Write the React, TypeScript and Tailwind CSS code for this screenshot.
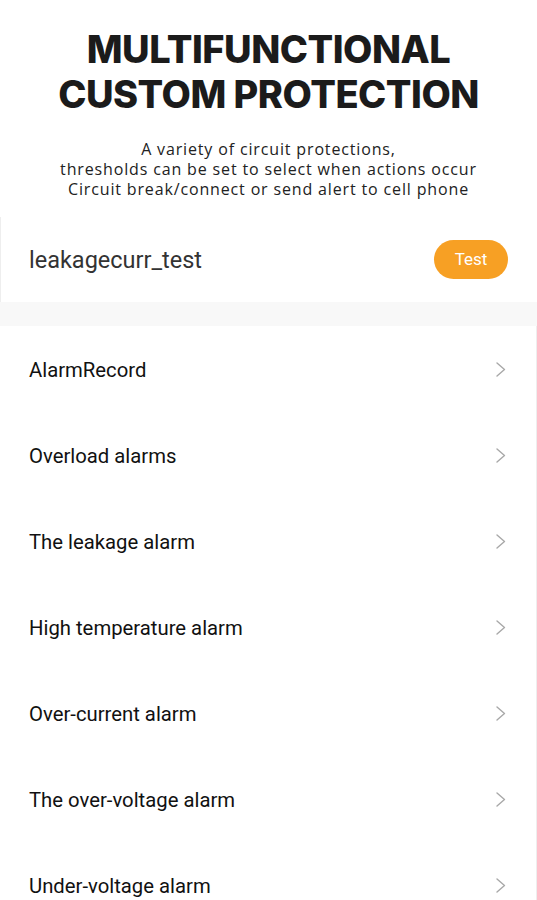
const items = [
  "AlarmRecord",
  "Overload alarms",
  "The leakage alarm",
  "High temperature alarm",
  "Over-current alarm",
  "The over-voltage alarm",
  "Under-voltage alarm",
];

function Chevron() {
  return (
    <svg width="10" height="15" viewBox="0 0 10 15" fill="none" className="text-[#a8a8a8]">
      <path d="M1 1 L8.5 7.5 L1 14" stroke="currentColor" strokeWidth="1.4" strokeLinecap="round" strokeLinejoin="round" />
    </svg>
  );
}

export default function App() {
  return (
    <div className="h-[900px] w-full overflow-hidden bg-white font-['Roboto',sans-serif]">
      {/* Header */}
      <div className="flex flex-col items-center pt-[27px]">
        <h1 className="text-center font-['Inter',sans-serif] text-[38px] font-extrabold leading-[45px] tracking-[-0.5px] text-[#1b1b1b]">
          MULTIFUNCTIONAL
          <br />
          CUSTOM PROTECTION
        </h1>
        <p className="mt-[22px] text-center font-['Open_Sans',sans-serif] text-[16px] leading-[20px] tracking-[0.85px] text-[#222]">
          A variety of circuit protections,
          <br />
          thresholds can be set to select when actions occur
          <br />
          Circuit break/connect or send alert to cell phone
        </p>
      </div>

      {/* Device row */}
      <div className="mt-[18px] flex h-[85px] items-center justify-between border-l border-[#eee] pl-[28px] pr-[29px]">
        <span className="pt-[3px] text-[23.5px] text-[#333]">leakagecurr_test</span>
        <button className="flex h-[39px] w-[74px] items-center justify-center rounded-full bg-[#f7a024] text-[17px] text-white">
          Test
        </button>
      </div>

      <div className="h-[24px] bg-[#f8f8f8]" />

      {/* List */}
      <div className="border-r border-[#eee]">
        {items.map((t) => (
          <div key={t} className="flex h-[86px] items-center justify-between pl-[29px] pr-[30px]">
            <span className="pt-[3px] text-[20.3px] text-[#111]">{t}</span>
            <span className="pt-[1px]">
              <Chevron />
            </span>
          </div>
        ))}
      </div>
    </div>
  );
}
